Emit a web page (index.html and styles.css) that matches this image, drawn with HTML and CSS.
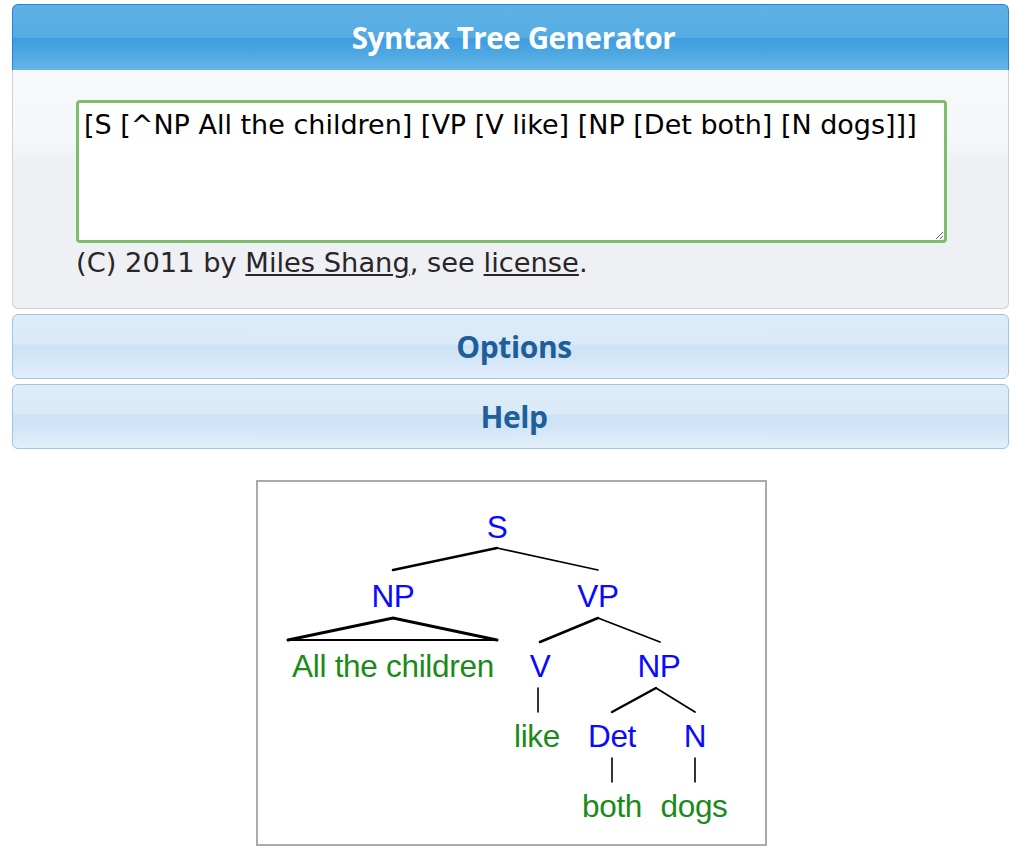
FILE: index.html
```html
<!DOCTYPE html>
<html>
<head>
<meta charset="utf-8">
<link rel="stylesheet" href="styles.css">
</head>
<body>
<div class="app">
  <section class="panel">
    <h1 class="panel-header">Syntax Tree Generator</h1>
    <div class="panel-body">
      <textarea class="phrase" spellcheck="false">[S [^NP All the children] [VP [V like] [NP [Det both] [N dogs]]]</textarea>
      <p class="credit">(C) 2011 by <a href="#">Miles Shang</a>, see <a href="#">license</a>.</p>
    </div>
  </section>
  <div class="section-head">Options</div>
  <div class="section-head">Help</div>
  <div class="tree-wrap">
    <div class="tree-frame">
      <svg class="tree" width="507" height="362" viewBox="0 0 507 362">
        <g class="edges">
          <line x1="239" y1="66" x2="135" y2="88" stroke-width="2.6"/>
          <line x1="239" y1="66" x2="340" y2="88" stroke-width="1.6"/>
          <polyline points="30,158 135,136 239,158" stroke-width="3" fill="none"/>
          <line x1="30" y1="158" x2="239" y2="158" stroke-width="1.8"/>
          <line x1="340" y1="136" x2="282" y2="160" stroke-width="2.6"/>
          <line x1="340" y1="136" x2="402" y2="160" stroke-width="1.8"/>
          <line x1="280" y1="206" x2="280" y2="230" stroke-width="1.6"/>
          <line x1="398" y1="206" x2="354" y2="230" stroke-width="2.4"/>
          <line x1="398" y1="206" x2="437" y2="230" stroke-width="1.8"/>
          <line x1="354" y1="276" x2="354" y2="300" stroke-width="1.6"/>
          <line x1="437" y1="276" x2="437" y2="300" stroke-width="1.6"/>
        </g>
        <g class="cat">
          <text x="239" y="56">S</text>
          <text x="135" y="125">NP</text>
          <text x="340" y="125">VP</text>
          <text x="282" y="195">V</text>
          <text x="401" y="195">NP</text>
          <text x="354" y="265">Det</text>
          <text x="437" y="265">N</text>
        </g>
        <g class="word">
          <text x="135" y="195">All the children</text>
          <text x="279" y="265">like</text>
          <text x="354" y="335">both</text>
          <text x="436" y="335">dogs</text>
        </g>
      </svg>
    </div>
  </div>
</div>
</body>
</html>
```

FILE: styles.css
```css
html, body {
  margin: 0;
  padding: 0;
  background: #ffffff;
}

.app {
  margin: 4px 1px 0 12px;
  font-family: "DejaVu Sans", "Open Sans", sans-serif;
}

.panel {
  margin: 0;
}

.panel-header {
  margin: 0;
  height: 65px;
  border: 1px solid #2a7fd8;
  border-bottom: none;
  border-radius: 6px 6px 0 0;
  background: linear-gradient(#5eb1e4 0%, #56ace2 50%, #3d9ce0 51%, #4aa5e2 70%, #64b6e7 100%);
  color: #ffffff;
  font-family: "Open Sans", "DejaVu Sans", sans-serif;
  font-weight: 700;
  font-size: 29.5px;
  line-height: 65px;
  padding-left: 6px;
  text-align: center;
  letter-spacing: -0.4px;
}

.panel-body {
  border: 1px solid #d2d2d4;
  border-top: none;
  border-radius: 0 0 6px 6px;
  background: linear-gradient(#f7f8fa 0%, #f6f7f9 28%, #eff0f4 40%, #eff0f4 100%);
  padding: 30px 61px 0 63px;
  height: 239px;
  box-sizing: border-box;
}

.phrase {
  display: block;
  width: 100%;
  height: 143px;
  box-sizing: border-box;
  margin: 0;
  border: 3px solid #7dbd6c;
  border-radius: 4px;
  background: #ffffff;
  padding: 6px 5px 3px 5px;
  font-family: "DejaVu Sans", sans-serif;
  font-size: 27px;
  line-height: 32px;
  color: #000000;
  outline: none;
  resize: both;
}

.credit {
  margin: 2px 0 0 0;
  font-family: "DejaVu Sans", sans-serif;
  font-size: 27.3px;
  line-height: 36px;
  color: #2a2528;
}

.credit a {
  color: #2a2528;
  text-decoration: underline;
}

.section-head {
  margin-top: 5px;
  height: 63px;
  border: 1px solid #9ec4e6;
  border-radius: 6px;
  background: linear-gradient(#ddecf8 0%, #dbeaf8 45%, #cde2f6 49%, #d3e6f7 70%, #e3effb 100%);
  color: #1e5f9b;
  font-family: "Open Sans", "DejaVu Sans", sans-serif;
  font-weight: 700;
  font-size: 30px;
  line-height: 63px;
  padding-left: 7px;
  text-align: center;
  letter-spacing: -0.4px;
}

.tree-wrap {
  display: flex;
  justify-content: center;
  padding: 31px 0 0 0;
  margin-left: 1px;
}

.tree-frame {
  border: 2px solid #aaaaaa;
  background: #ffffff;
  line-height: 0;
}

.tree {
  display: block;
}

.edges line,
.edges polyline {
  stroke: #000000;
  stroke-linecap: round;
}

.tree text {
  font-family: "Liberation Sans", Arial, sans-serif;
  font-size: 31.5px;
  text-anchor: middle;
  letter-spacing: -0.3px;
}

.cat text {
  fill: #0a0aff;
}

.word text {
  fill: #1b8a1b;
}
```
